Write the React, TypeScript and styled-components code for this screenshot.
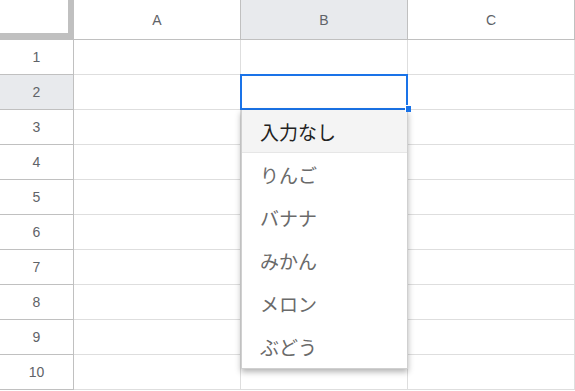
import React from "react";
import styled, { createGlobalStyle, css } from "styled-components";

const Global = createGlobalStyle`
  html, body { margin: 0; padding: 0; background: #fff; overflow: hidden; }
  body { width: 575px; height: 391px; font-family: Roboto, "Liberation Sans", Arial, sans-serif; }
`;

const Sheet = styled.div`
  display: grid;
  grid-template-columns: 74px 167px 167px 1fr;
  grid-template-rows: 40px repeat(10, 35px);
  width: 575px;
  background: #fff;
`;

const Corner = styled.div`
  box-sizing: border-box;
  background: #fff;
  border-right: 6px solid #c0c0c0;
  border-bottom: 7px solid #c0c0c0;
`;

const ColHeader = styled.div<{ $active?: boolean }>`
  box-sizing: border-box;
  display: flex;
  align-items: center;
  justify-content: center;
  background: ${(p) => (p.$active ? "#e8eaed" : "#fff")};
  border-right: 1px solid #c0c0c0;
  border-bottom: 1px solid #c0c0c0;
  color: #5f6368;
  font-family: "Liberation Sans", Arial, sans-serif;
  font-size: 14px;
  padding-top: 1px;
`;

const RowHeader = styled.div<{ $active?: boolean }>`
  box-sizing: border-box;
  display: flex;
  align-items: center;
  justify-content: center;
  background: ${(p) => (p.$active ? "#e8eaed" : "#fff")};
  border-right: 1px solid #c0c0c0;
  border-bottom: 1px solid #c0c0c0;
  color: #5f6368;
  font-family: "Liberation Sans", Arial, sans-serif;
  font-size: 14px;
`;

const Cell = styled.div<{ $selected?: boolean }>`
  box-sizing: border-box;
  position: relative;
  background: #fff;
  border-right: 1px solid #dedede;
  border-bottom: 1px solid #dedede;
  ${(p) =>
    p.$selected &&
    css`
      z-index: 2;
      &::after {
        content: "";
        position: absolute;
        top: -1px;
        left: -1px;
        right: -1px;
        bottom: -1px;
        border: 2px solid #1a73e8;
        pointer-events: none;
      }
    `}
`;

const Handle = styled.span`
  position: absolute;
  right: -4px;
  bottom: -3px;
  width: 5px;
  height: 6px;
  background: #1a73e8;
  border-left: 1px solid #fff;
  border-top: 1px solid #fff;
  z-index: 3;
`;

const Menu = styled.ul`
  position: absolute;
  top: 100%;
  left: 0;
  width: 167px;
  margin: 1px 0 0;
  padding: 0;
  list-style: none;
  background: #fff;
  box-sizing: border-box;
  border: 1px solid #d0d0d0;
  border-top: none;
  box-shadow: 0 3px 6px rgba(0, 0, 0, 0.3);
  z-index: 1;
`;

const Item = styled.li<{ $highlight?: boolean }>`
  height: 43px;
  display: flex;
  align-items: center;
  padding-left: 18px;
  font-family: "Noto Sans CJK JP", "Noto Sans", sans-serif;
  font-size: 19px;
  color: ${(p) => (p.$highlight ? "#222222" : "#6a6a6a")};
  background: ${(p) => (p.$highlight ? "#f4f4f4" : "#fff")};
  border-bottom: ${(p) => (p.$highlight ? "1px solid #e6e6e6" : "none")};
  box-sizing: border-box;
`;

const options = ["入力なし", "りんご", "バナナ", "みかん", "メロン", "ぶどう"];
const cols = ["A", "B", "C"];

export default function App() {
  const rows = Array.from({ length: 10 }, (_, i) => i + 1);
  return (
    <>
      <Global />
      <Sheet>
        <Corner />
        {cols.map((c) => (
          <ColHeader key={c} $active={c === "B"}>
            {c}
          </ColHeader>
        ))}
        {rows.map((r) => (
          <React.Fragment key={r}>
            <RowHeader $active={r === 2}>{r}</RowHeader>
            {cols.map((c) => {
              const sel = r === 2 && c === "B";
              return (
                <Cell key={c} $selected={sel}>
                  {sel && (
                    <>
                      <Handle />
                      <Menu>
                        {options.map((o, i) => (
                          <Item key={o} $highlight={i === 0}>
                            {o}
                          </Item>
                        ))}
                      </Menu>
                    </>
                  )}
                </Cell>
              );
            })}
          </React.Fragment>
        ))}
      </Sheet>
    </>
  );
}
